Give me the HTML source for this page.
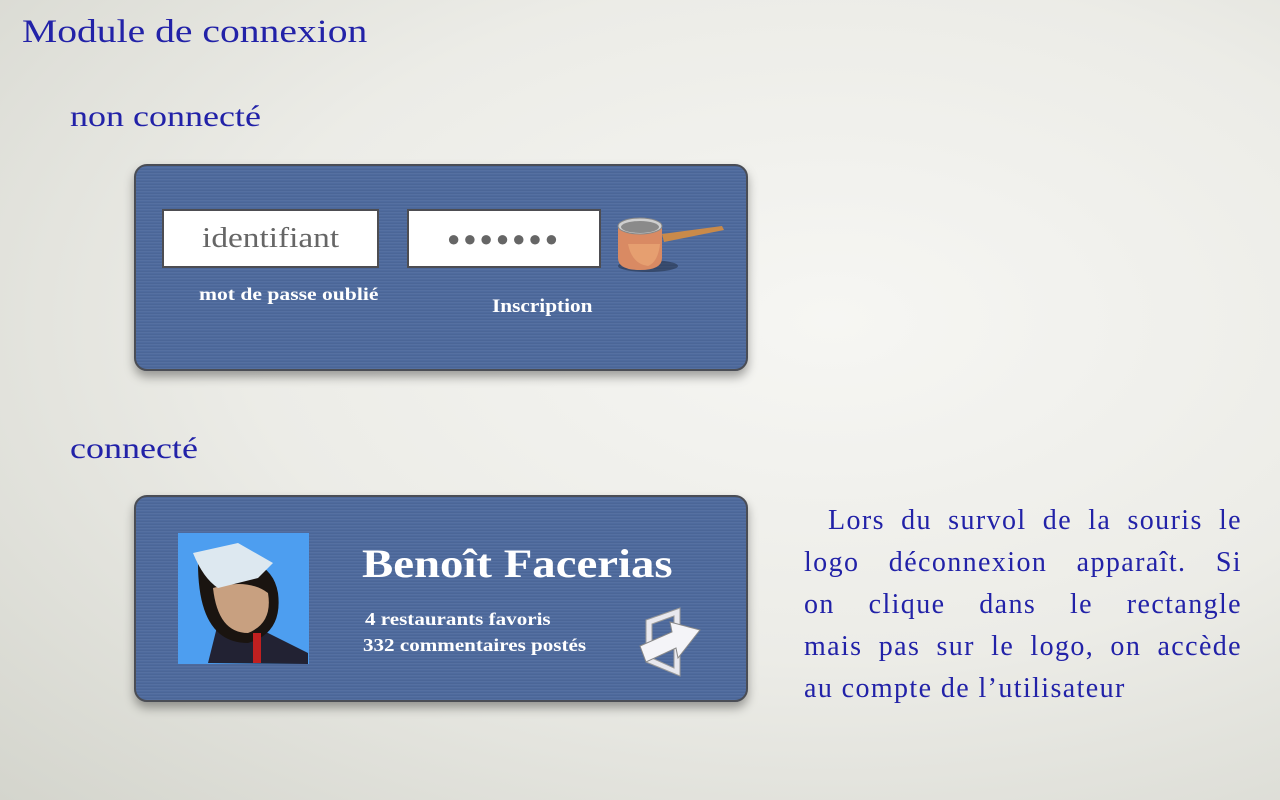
<!DOCTYPE html>
<html><head><meta charset="utf-8"><style>
html,body{margin:0;padding:0;width:1280px;height:800px;overflow:hidden}
body{background:radial-gradient(ellipse at 65% 40%,#f6f6f3 0%,#ececE7 50%,#d4d5cd 100%);font-family:"Liberation Serif",serif;position:relative}
.t{position:absolute;color:#2222a8;white-space:nowrap;transform-origin:0 0}
.s{transform:scaleX(1.2);transform-origin:0 0}
.panel{position:absolute;left:134px;width:610px;height:203px;background:#4e6a9d;border:2px solid #4a4d55;border-radius:13px;box-shadow:0 6px 10px rgba(0,0,0,.35);
background-image:repeating-linear-gradient(0deg,rgba(255,255,255,.04) 0 1px,rgba(0,0,0,.04) 1px 2px,transparent 2px 3px)}
.inp{position:absolute;background:#fff;border:2px solid #4d4d52;box-sizing:border-box;text-align:center;color:#666}
.w{position:absolute;color:#fff;font-weight:bold;white-space:nowrap;transform-origin:0 0}
.p{position:absolute;color:#2222a8;left:804px;top:500px;width:438px;font-size:28px;line-height:42px;letter-spacing:1.4px}
.p div{text-align:justify;text-align-last:justify;white-space:nowrap}
.p div.l{text-align-last:left}
</style></head><body>
<div class="t s" style="left:22px;top:14px;font-size:33px">Module de connexion</div>
<div class="t s" style="left:70px;top:100px;font-size:30px">non connecté</div>
<div class="t s" style="left:70px;top:432px;font-size:30px">connecté</div>

<div class="panel" style="top:164px"></div>
<div class="inp" style="left:162px;top:209px;width:217px;height:59px;font-size:29px;line-height:55px"><span style="display:inline-block;transform:scaleX(1.15)">identifiant</span></div>
<div class="inp" style="left:407px;top:209px;width:194px;height:59px;font-size:22px;line-height:55px;letter-spacing:3px">●●●●●●●</div>
<svg style="position:absolute;left:614px;top:214px" width="115" height="62" viewBox="0 0 115 62">
<ellipse cx="34" cy="52" rx="30" ry="6" fill="rgba(0,0,0,.3)"/>
<path d="M48 20 L108 12 L110 16 L50 28 Z" fill="#c98a4a"/>
<path d="M4 12 L4 44 Q4 56 26 56 Q48 56 48 44 L48 12 Z" fill="#d98a63"/>
<path d="M14 30 Q18 50 34 52 Q44 48 46 30 Z" fill="#efad7a" opacity=".6"/>
<ellipse cx="26" cy="12" rx="22" ry="8" fill="#cfcfcf" stroke="#888"/>
<ellipse cx="26" cy="13" rx="19" ry="6" fill="#8a8a8a"/>
</svg>
<div class="w" style="left:199px;top:284px;font-size:18px;transform:scaleX(1.2)">mot de passe oublié</div>
<div class="w" style="left:492px;top:296px;font-size:19px;transform:scaleX(1.12)">Inscription</div>

<div class="panel" style="top:495px"></div>
<svg style="position:absolute;left:178px;top:533px" width="131" height="131" viewBox="0 0 131 131">
<rect width="131" height="131" fill="#4d9ef0"/>
<path d="M30 130 L40 90 Q60 100 80 95 L130 120 L130 131 Z" fill="#223"/>
<path d="M20 30 Q20 110 70 110 Q105 100 100 60 Q95 30 60 25 Z" fill="#1a1410"/>
<path d="M35 55 Q40 100 70 100 Q95 90 90 60 Q70 45 35 55 Z" fill="#c8a080"/>
<path d="M15 20 L60 10 L95 30 L80 45 L40 55 Q25 45 15 20 Z" fill="#dde8f0"/>
<rect x="75" y="100" width="8" height="30" fill="#c02020"/>
</svg>
<div class="w" style="left:362px;top:540px;font-size:40px;transform:scaleX(1.17)">Benoît Facerias</div>
<div class="w" style="left:365px;top:609px;font-size:18px;transform:scaleX(1.17)">4 restaurants favoris</div>
<div class="w" style="left:363px;top:635px;font-size:18px;transform:scaleX(1.17)">332 commentaires postés</div>
<svg style="position:absolute;left:638px;top:604px" width="66" height="74" viewBox="0 0 66 74">
<path d="M8 16 L42 4 L42 72 L8 58 Z M14 20 L14 54 L36 64 L36 12 Z" fill="#e8e8ee" stroke="#999" stroke-width="1"/>
<path d="M2 42 L34 28 L32 18 L62 26 L40 54 L38 44 L8 58 Z" fill="#f4f4f8" stroke="#888" stroke-width="1"/>
</svg>

<div class="p">
<div style="padding-left:24px">Lors du survol de la souris le</div>
<div>logo déconnexion apparaît. Si</div>
<div>on clique dans le rectangle</div>
<div>mais pas sur le logo, on accède</div>
<div class="l">au compte de l’utilisateur</div>
</div>
</body></html>
